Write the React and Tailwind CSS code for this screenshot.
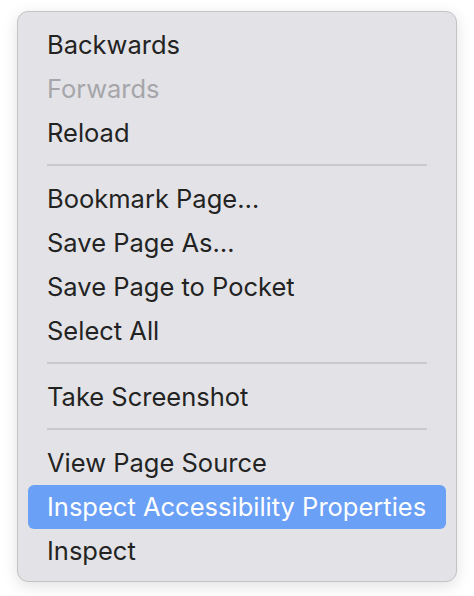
export default function App() {
  const Item = ({ children, disabled, active }) => (
    <div
      className={`h-[44px] flex items-center px-[19px] rounded-[6px] text-[25.5px] leading-none ${
        active ? 'bg-[#6aa0f6] text-white' : disabled ? 'text-[#a6a6aa]' : 'text-[#232323]'
      }`}
    >
      {children}
    </div>
  )

  const Sep = () => <div className="mx-[19px] mt-[9px] mb-[11px] h-[2px] bg-[#c9c9cd]" />

  return (
    <div className="w-[474px] h-[596px] bg-white pt-[11px] pl-[17px]" style={{ fontFamily: 'Inter, "Noto Sans", sans-serif' }}>
      <div className="w-[440px] h-[571px] rounded-[11px] border border-[#c3c3c5] bg-[#e3e3e7] px-[10px] pt-[11px] shadow-[0_4px_16px_rgba(0,0,0,0.12)]">
        <Item>Backwards</Item>
        <Item disabled>Forwards</Item>
        <Item>Reload</Item>
        <Sep />
        <Item>Bookmark Page…</Item>
        <Item>Save Page As…</Item>
        <Item>Save Page to Pocket</Item>
        <Item>Select All</Item>
        <Sep />
        <Item>Take Screenshot</Item>
        <Sep />
        <Item>View Page Source</Item>
        <Item active>Inspect Accessibility Properties</Item>
        <Item>Inspect</Item>
      </div>
    </div>
  )
}
